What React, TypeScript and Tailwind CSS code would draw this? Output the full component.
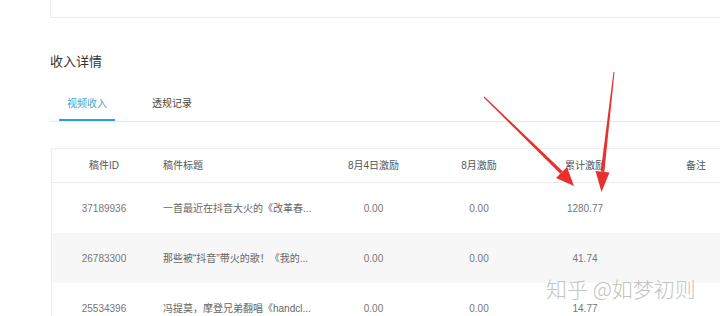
import React from "react";

const font = { fontFamily: '"Liberation Sans", "Noto Sans CJK SC", sans-serif' };

const rows = [
  { id: "37189936", title: "一首最近在抖音大火的《改革春...", a: "0.00", b: "0.00", c: "1280.77", bg: "bg-white" },
  { id: "26783300", title: "那些被“抖音”带火的歌！《我的...", a: "0.00", b: "0.00", c: "41.74", bg: "bg-[#f7f7f7]" },
  { id: "25534396", title: "冯提莫，摩登兄弟翻唱《handcl...", a: "0.00", b: "0.00", c: "14.77", bg: "bg-white" },
];

const cols = "grid grid-cols-[104px_165px_105px_106px_106px_116px]";

export default function App() {
  return (
    <div
      className="relative w-[720px] h-[316px] overflow-hidden bg-white"
      style={font}
    >
      <div className="pl-[50px]">
        <div className="h-[18px] border-l border-b border-[#ececec]" />
        <div className="mt-[35px] text-[13px] leading-[18px] text-[#333]">收入详情</div>
        <div className="mt-[26px] flex border-b border-[#e8e8e8]">
          <div className="ml-[9px] px-[8px] pb-[8px] border-b-2 border-[#2ea1d0] text-[10px] leading-[14px] text-[#3ea6d6]">
            视频收入
          </div>
          <div className="ml-[29px] px-[8px] pb-[8px] text-[10px] leading-[14px] text-[#444]">
            透规记录
          </div>
        </div>
        <div className="mt-[26px] ml-[1px] border-t border-l border-[#ececec]">
          <div className={`${cols} h-[34px] items-center border-b border-[#ececec] text-[10px] text-[#555]`}>
            <div className="text-center">稿件ID</div>
            <div className="pl-[7px]">稿件标题</div>
            <div className="text-center">8月4日激励</div>
            <div className="text-center">8月激励</div>
            <div className="text-center">累计激励</div>
            <div className="text-center">备注</div>
          </div>
          {rows.map((r) => (
            <div
              key={r.id}
              className={`${cols} h-[50px] items-center text-[10px] text-[#777] ${r.bg}`}
            >
              <div className="text-center">{r.id}</div>
              <div className="pl-[7px] text-[#666]">{r.title}</div>
              <div className="text-center">{r.a}</div>
              <div className="text-center">{r.b}</div>
              <div className="text-center">{r.c}</div>
              <div />
            </div>
          ))}
        </div>
      </div>

      <svg className="absolute left-0 top-0" width="720" height="316" viewBox="0 0 720 316">
        <polygon
          points="484.4,96.6 483.6,97.4 560.3,173.7 562.7,171.3"
          fill="#e8312f"
        />
        <polygon points="574,186 556,178 567,167" fill="#e8312f" />
        <polygon
          points="614.5,72 613.5,72 600.7,171.6 604.3,171.9"
          fill="#e8312f"
        />
        <polygon points="601.5,192 595.5,171 609.5,172.5" fill="#e8312f" />
      </svg>

      <div
        className="absolute left-[546px] top-[274px] text-[21px] leading-[28px] text-[#c3c3c3] whitespace-nowrap"
        style={{
          fontFamily: '"Noto Sans CJK SC", sans-serif',
          fontWeight: 300,
          textShadow: "0 0 2px #ffffff, 0 0 2px #ffffff",
        }}
      >
        知乎 @如梦初则
      </div>
    </div>
  );
}
